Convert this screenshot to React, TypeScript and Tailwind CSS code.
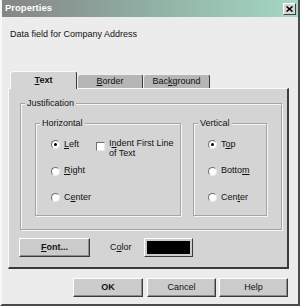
import React from "react";

const font = "font-['Liberation_Sans',Arial,sans-serif]";

function Radio({ checked }: { checked?: boolean }) {
  return (
    <span className="w-[9px] h-[9px] shrink-0 rounded-full bg-white border border-t-[#6f6f6f] border-l-[#6f6f6f] border-r-[#e8e8e8] border-b-[#e8e8e8] flex items-center justify-center">
      {checked && <span className="w-[3px] h-[3px] rounded-full bg-black" />}
    </span>
  );
}

function RadioRow({
  checked,
  children,
}: {
  checked?: boolean;
  children: React.ReactNode;
}) {
  return (
    <div className="flex items-center gap-[4px] h-[13px]">
      <Radio checked={checked} />
      <span>{children}</span>
    </div>
  );
}

function GroupBox({
  label,
  className,
  children,
}: {
  label: string;
  className: string;
  children: React.ReactNode;
}) {
  return (
    <fieldset
      className={`border border-[#a4a4a4] shadow-[1px_1px_0_#f6f6f6,inset_1px_1px_0_#f6f6f6] ${className}`}
    >
      <legend className="ml-[4px] px-[2px] leading-[11px] bg-[#d4d4d4]">
        {label}
      </legend>
      {children}
    </fieldset>
  );
}

function Button({
  bold,
  className,
  children,
}: {
  bold?: boolean;
  className: string;
  children: React.ReactNode;
}) {
  return (
    <button
      className={`h-[19px] bg-[#cbcbcb] border border-t-white border-l-white border-r-[#3a3a3a] border-b-[#3a3a3a] shadow-[inset_-1px_-1px_0_#8c8c8c] leading-none ${bold ? "font-bold" : ""} ${className}`}
    >
      {children}
    </button>
  );
}

export default function App() {
  return (
    <div
      className={`${font} text-[9px] text-[#111] w-[300px] h-[306px] bg-[#ececec] flex flex-col border-l-2 border-l-[#f7f7f7] border-r-2 border-r-[#4a4a4a] border-b-2 border-b-[#4a4a4a]`}
    >
      {/* Title bar */}
      <div className="h-[17px] shrink-0 flex items-center justify-between pl-[3px] pr-[2px] bg-gradient-to-r from-[#858585] via-[#8fb0a4] to-[#a5d8c3]">
        <span className="text-white font-bold text-[9.5px]">Properties</span>
        <span className="w-[13px] h-[12px] bg-[#d6d6d6] border border-t-white border-l-white border-r-[#404040] border-b-[#404040] flex items-center justify-center">
          <svg width="7" height="6" viewBox="0 0 7 6">
            <path d="M0.5 0.5L6.5 5.5M6.5 0.5L0.5 5.5" stroke="#000" strokeWidth="1.6" />
          </svg>
        </span>
      </div>

      <p className="ml-[8px] mt-[12px] leading-[11px]">
        Data field for Company Address
      </p>

      {/* Tabs */}
      <div className="ml-[8px] mt-[31px] h-[17px] flex items-end relative z-10">
        <div className="w-[67px] h-[18px] -mb-[1px] bg-[#d4d4d4] rounded-t-[3px] border-t border-l border-[#fafafa] border-r border-r-[#3a3a3a] flex items-center justify-center font-bold">
          <span>
            <u>T</u>ext
          </span>
        </div>
        <div className="w-[66px] h-[14px] bg-[#b6b6b6] rounded-t-[3px] border-t border-l border-[#f0f0f0] border-r border-r-[#3a3a3a] flex items-center justify-center">
          <span>
            <u>B</u>order
          </span>
        </div>
        <div className="w-[67px] h-[14px] bg-[#b6b6b6] rounded-t-[3px] border-t border-l border-[#f0f0f0] border-r border-r-[#3a3a3a] flex items-center justify-center">
          <span>
            Bac<u>k</u>ground
          </span>
        </div>
      </div>

      {/* Panel */}
      <div className="ml-[6px] w-[281px] h-[181px] shrink-0 bg-[#d4d4d4] border-t border-l border-[#fafafa] border-r-2 border-r-[#3a3a3a] border-b-2 border-b-[#3a3a3a] pl-[11px] pt-[9px] flex flex-col">
        <GroupBox label="Justification" className="w-[262px] h-[132px]">
          <div className="flex gap-[12px] px-[14px] pt-[9px]">
            <GroupBox label="Horizontal" className="w-[146px] h-[98px]">
              <div className="flex pl-[15px] pt-[9px]">
                <div className="w-[45px] flex flex-col gap-[13.5px]">
                  <RadioRow checked>
                    <u>L</u>eft
                  </RadioRow>
                  <RadioRow>
                    <u>R</u>ight
                  </RadioRow>
                  <RadioRow>
                    C<u>e</u>nter
                  </RadioRow>
                </div>
                <div className="flex items-start gap-[4px]">
                  <span className="mt-[4px] w-[9px] h-[9px] shrink-0 bg-white border border-t-[#6f6f6f] border-l-[#6f6f6f] border-r-[#e8e8e8] border-b-[#e8e8e8]" />
                  <span className="leading-[10px]">
                    I<u>n</u>dent First Line
                    <br />
                    of Text
                  </span>
                </div>
              </div>
            </GroupBox>
            <GroupBox label="Vertical" className="w-[74px] h-[98px]">
              <div className="flex flex-col gap-[13.5px] pl-[14px] pt-[9px]">
                <RadioRow checked>
                  T<u>o</u>p
                </RadioRow>
                <RadioRow>
                  Botto<u>m</u>
                </RadioRow>
                <RadioRow>
                  Cen<u>t</u>er
                </RadioRow>
              </div>
            </GroupBox>
          </div>
        </GroupBox>

        <div className="mt-[8px] flex items-center">
          <Button bold className="w-[71px] -ml-[1px]">
            <u>F</u>ont...
          </Button>
          <span className="ml-[20px] w-[34px]">
            C<u>o</u>lor
          </span>
          <span className="w-[49px] h-[19px] bg-[#cbcbcb] border border-t-white border-l-white border-r-[#3a3a3a] border-b-[#3a3a3a] p-[2px]">
            <span className="block w-full h-full bg-black" />
          </span>
        </div>
      </div>

      {/* Dialog buttons */}
      <div className="mt-[9px] flex justify-end pr-[10px]">
        <Button bold className="w-[70px]">
          OK
        </Button>
        <Button className="w-[69px] ml-[4px]">Cancel</Button>
        <Button className="w-[69px] ml-[3px]">Help</Button>
      </div>
    </div>
  );
}
